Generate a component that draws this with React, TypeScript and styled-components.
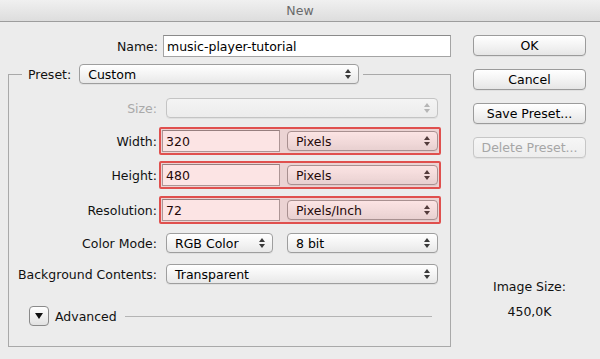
import React from "react";
import styled, { createGlobalStyle } from "styled-components";

const GlobalStyle = createGlobalStyle`
  html, body {
    margin: 0;
    padding: 0;
    background: #ececec;
  }

  body {
    font-family: "DejaVu Sans", "Liberation Sans", sans-serif;
    font-size: 12.5px;
    color: #111;
  }
`;

const Dialog = styled.div`
  width: 600px;
  height: 359px;
  overflow: hidden;
  background: #ececec;
  display: flex;
  flex-direction: column;
`;

const TitleBar = styled.div`
  height: 21px;
  border-bottom: 1px solid #9d9d9d;
  background: linear-gradient(#f0f0f0, #dddddd);
  display: flex;
  align-items: center;
  justify-content: center;
  color: #6a6a6a;
`;

const Body = styled.div`
  flex: 1;
  display: flex;
  padding-left: 8px;
`;

const Main = styled.div`
  width: 443px;
  display: flex;
  flex-direction: column;
`;

const Side = styled.div`
  width: 113px;
  margin-left: 22px;
  padding-top: 13px;
  display: flex;
  flex-direction: column;
  gap: 13px;
`;

const NameRow = styled.div`
  margin-top: 13px;
  height: 22px;
  display: flex;
  align-items: center;
`;

const Label = styled.span<{ $width?: number; $disabled?: boolean }>`
  width: ${(p) => (p.$width ? `${p.$width}px` : "auto")};
  flex-shrink: 0;
  text-align: right;
  white-space: nowrap;
  color: ${(p) => (p.$disabled ? "#a9a9a9" : "#111")};
`;

const TextField = styled.div<{ $width: number; $height: number }>`
  width: ${(p) => p.$width}px;
  height: ${(p) => p.$height}px;
  box-sizing: border-box;
  margin-left: ${(p) => (p.$width > 200 ? "5px" : "0")};
  border: 1px solid #a4a4a4;
  border-top-color: #8a8a8a;
  background: #fff;
  display: flex;
  align-items: center;
  padding-left: 3px;
  color: #000;
`;

const Group = styled.fieldset`
  margin: 7px 0 0 0;
  padding: 14px 0 20px 0;
  min-width: 0;
  border: 1px solid #a9a9a9;
  display: flex;
  flex-direction: column;
`;

const Legend = styled.legend`
  margin-left: 13px;
  padding: 0 4px 0 6px;
  height: 20px;
  display: flex;
  align-items: center;
  gap: 8px;
`;

const Row = styled.div<{ $top: number; $height?: number }>`
  margin-top: ${(p) => p.$top}px;
  height: ${(p) => p.$height ?? 20}px;
  display: flex;
  align-items: center;
`;

const Controls = styled.div<{ $offset: number }>`
  margin-left: ${(p) => p.$offset}px;
  display: flex;
  align-items: center;
  gap: 14px;
`;

const SelectBox = styled.div<{ $width: number; $disabled?: boolean }>`
  width: ${(p) => p.$width}px;
  height: 20px;
  box-sizing: border-box;
  border: 1px solid ${(p) => (p.$disabled ? "#c4c4c4" : "#9e9e9e")};
  border-radius: 4px;
  background: ${(p) =>
    p.$disabled
      ? "linear-gradient(#f4f4f4, #ececec)"
      : "linear-gradient(#ffffff, #f3f3f3 55%, #e8e8e8)"};
  box-shadow: 0 1px 0 rgba(0, 0, 0, 0.05);
  display: flex;
  align-items: center;
  justify-content: space-between;
  padding: 0 7px 0 8px;
  color: #000;
  white-space: nowrap;
`;

const Highlight = styled.div`
  position: relative;
  width: 282px;
  height: 28px;
  box-sizing: border-box;
  border: 2px solid #e0504e;
  border-radius: 2px;
  padding: 0 1px;
  display: flex;
  align-items: center;
  gap: 7px;

  &::after {
    content: "";
    position: absolute;
    inset: 0;
    background: rgba(232, 64, 64, 0.14);
    pointer-events: none;
  }
`;

const AdvancedRow = styled.div`
  margin-top: 22px;
  height: 20px;
  padding-left: 20px;
  display: flex;
  align-items: center;
`;

const Disclosure = styled.div`
  width: 20px;
  height: 20px;
  box-sizing: border-box;
  border: 1px solid #8a8a8a;
  border-radius: 4px;
  background: linear-gradient(#ffffff, #e2e2e2);
  display: flex;
  align-items: center;
  justify-content: center;
`;

const AdvancedText = styled.span`
  margin-left: 6px;
`;

const Rule = styled.div`
  flex: 1;
  height: 1px;
  margin: 0 18px 0 8px;
  background: #b4b4b4;
`;

const Button = styled.button<{ $disabled?: boolean }>`
  width: 113px;
  height: 21px;
  box-sizing: border-box;
  padding: 0;
  border: 1px solid ${(p) => (p.$disabled ? "#c6c6c6" : "#9b9b9b")};
  border-radius: 4px;
  background: ${(p) =>
    p.$disabled
      ? "linear-gradient(#f6f6f6, #ededed)"
      : "linear-gradient(#ffffff, #f2f2f2 55%, #e6e6e6)"};
  box-shadow: 0 1px 0 rgba(0, 0, 0, 0.05);
  font-family: inherit;
  font-size: 12.5px;
  color: ${(p) => (p.$disabled ? "#a6a6a6" : "#000")};
`;

const ImageSize = styled.div`
  margin-top: 103px;
  text-align: center;
  line-height: 25px;
  color: #111;
`;

const Arrows = ({ disabled }: { disabled?: boolean }) => (
  <svg width="6" height="10" viewBox="0 0 6 10">
    <polygon points="0,4 3,0 6,4" fill={disabled ? "#b5b5b5" : "#3a3a3a"} />
    <polygon points="0,6 3,10 6,6" fill={disabled ? "#b5b5b5" : "#3a3a3a"} />
  </svg>
);

const Select = ({
  width,
  value,
  disabled,
}: {
  width: number;
  value?: string;
  disabled?: boolean;
}) => (
  <SelectBox $width={width} $disabled={disabled}>
    <span>{value}</span>
    <Arrows disabled={disabled} />
  </SelectBox>
);

const UnitRow = ({
  label,
  top,
  value,
  unit,
}: {
  label: string;
  top: number;
  value: string;
  unit: string;
}) => (
  <Row $top={top} $height={28}>
    <Label $width={148}>{label}</Label>
    <Controls $offset={2}>
      <Highlight>
        <TextField $width={118} $height={22}>
          {value}
        </TextField>
        <Select width={151} value={unit} />
      </Highlight>
    </Controls>
  </Row>
);

const App = () => {
  return (
    <Dialog>
      <GlobalStyle />
      <TitleBar>New</TitleBar>
      <Body>
        <Main>
          <NameRow>
            <Label $width={150}>Name:</Label>
            <TextField $width={288} $height={22}>
              music-player-tutorial
            </TextField>
          </NameRow>

          <Group>
            <Legend>
              <Label>Preset:</Label>
              <Select width={280} value="Custom" />
            </Legend>

            <Row $top={0}>
              <Label $width={148} $disabled>
                Size:
              </Label>
              <Controls $offset={9}>
                <Select width={272} disabled />
              </Controls>
            </Row>

            <UnitRow label="Width:" top={9} value="320" unit="Pixels" />
            <UnitRow label="Height:" top={6} value="480" unit="Pixels" />
            <UnitRow label="Resolution:" top={7} value="72" unit="Pixels/Inch" />

            <Row $top={9}>
              <Label $width={148}>Color Mode:</Label>
              <Controls $offset={9}>
                <Select width={107} value="RGB Color" />
                <Select width={151} value="8 bit" />
              </Controls>
            </Row>

            <Row $top={11}>
              <Label $width={148}>Background Contents:</Label>
              <Controls $offset={9}>
                <Select width={272} value="Transparent" />
              </Controls>
            </Row>

            <AdvancedRow>
              <Disclosure>
                <svg width="8" height="6" viewBox="0 0 8 6">
                  <polygon points="0,0 8,0 4,6" fill="#111" />
                </svg>
              </Disclosure>
              <AdvancedText>Advanced</AdvancedText>
              <Rule />
            </AdvancedRow>
          </Group>
        </Main>

        <Side>
          <Button>OK</Button>
          <Button>Cancel</Button>
          <Button>Save Preset...</Button>
          <Button $disabled>Delete Preset...</Button>
          <ImageSize>
            Image Size:
            <br />
            450,0K
          </ImageSize>
        </Side>
      </Body>
    </Dialog>
  );
};

export default App;
